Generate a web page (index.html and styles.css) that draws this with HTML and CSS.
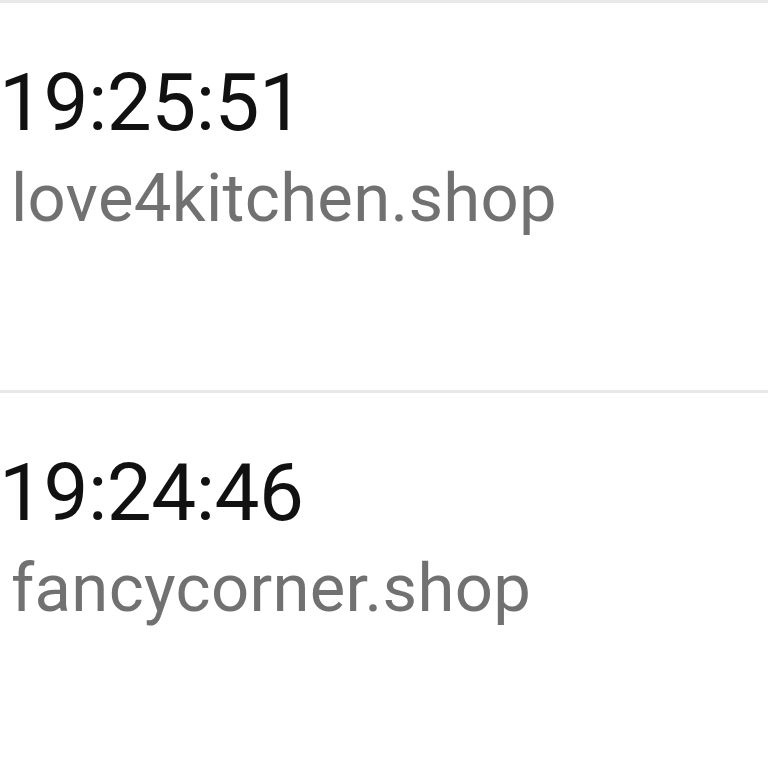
FILE: index.html
```html
<!DOCTYPE html>
<html lang="en">
<head>
    <meta charset="UTF-8">
    <meta name="viewport" content="width=device-width, initial-scale=1.0">
    <title>History</title>
    <link rel="stylesheet" href="styles.css">
</head>
<body>
    <div class="list">
        <div class="entry">
            <div class="time">19:25:51</div>
            <div class="site">love4kitchen.shop</div>
        </div>
        <div class="entry">
            <div class="time">19:24:46</div>
            <div class="site">fancycorner.shop</div>
        </div>
    </div>
</body>
</html>
```

FILE: styles.css
```css
body {
    margin: 0;
    background-color: #fff;
    font-family: Roboto, 'Noto Sans', Arial, sans-serif;
    overflow: hidden;
}
.list {
    display: flex;
    flex-direction: column;
}
.entry {
    height: 327px;
    border-top: 3px solid #e8e8e8;
    padding-top: 60px;
}
.entry .time {
    font-size: 80px;
    line-height: 80px;
    color: #111;
    margin-left: -1px;
    letter-spacing: -0.5px;
}
.entry .site {
    margin-top: 22px;
    margin-left: 11px;
    font-size: 67px;
    line-height: 67px;
    letter-spacing: 0.3px;
    color: #717171;
}
```
